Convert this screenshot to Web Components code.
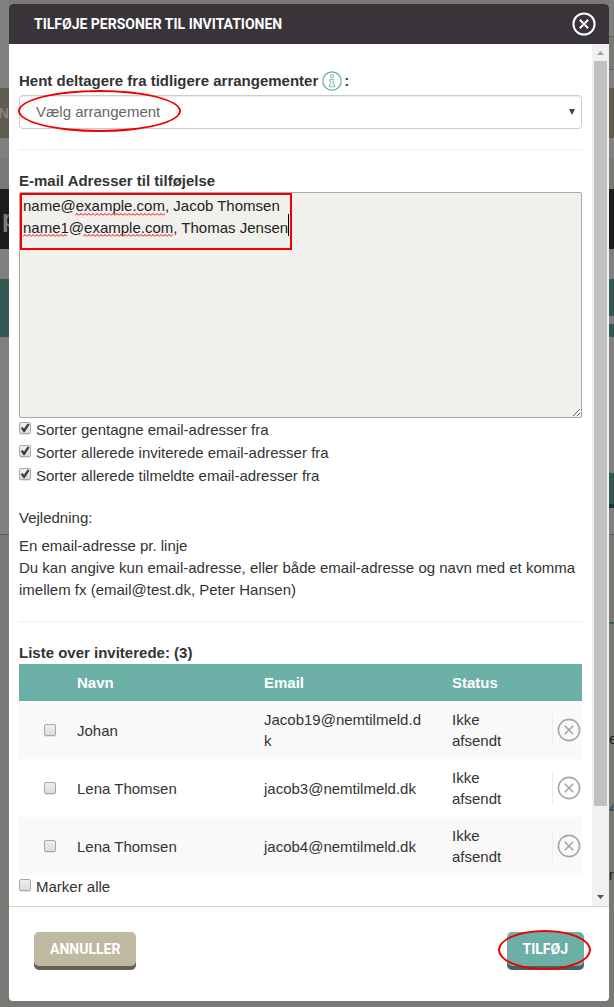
<!DOCTYPE html>
<html lang="da">
<head>
<meta charset="utf-8">
<meta name="viewport" content="width=device-width, initial-scale=1">
<title>Tilføje personer til invitationen</title>
<style>
  html, body {
    margin: 0;
    min-height: 100%;
  }

  body {
    font: 15px/22px "Liberation Sans", Arial, sans-serif;
    color: #333;
    background: #7b7976;
  }
</style>
</head>
<body>
<invite-page></invite-page>

<script>
// Small helper so each element only has to supply its markup
class BaseElement extends HTMLElement {
    constructor() {
        super()
        this.attachShadow({ mode: 'open' })
    }

    connectedCallback() {
        this.shadowRoot.innerHTML = this.template()
    }
}

// The dimmed page behind the dialog
class PageBackdrop extends BaseElement {
    template() {
        return `
      <style>
        :host {
          display: flex;
          justify-content: space-between;
          overflow: hidden;
          background: #7b7976;
        }

        .side {
          display: flex;
          flex-direction: column;
          width: 9px;
        }

        .right {
          width: 5px;
        }

        .side > div {
          box-sizing: border-box;
          overflow: hidden;
          white-space: nowrap;
        }

        .plain { background: #808080; }
        .warm { background: #7b7976; }
        .line { border-top: 1px solid #5f5d5a; }
        .olive { background: #605d50; color: #85838a; font-weight: 700; line-height: 50px; }
        .dark { background: #1c1c1c; color: #807e7b; font-size: 24px; font-weight: 700; line-height: 60px; }
        .teal { background: #365853; }
        .shade { background: #1f3331; }
        .number { color: #365853; font-size: 24px; }
        .text { color: #1c1c1c; }
        .left .olive { display: flex; justify-content: flex-end; }
        .left .dark { padding-left: 2px; }
      </style>

      <div class="side left">
        <div class="plain" style="height: 88px"></div>
        <div class="olive" style="height: 50px">AN</div>
        <div class="plain" style="height: 20px"></div>
        <div class="warm" style="height: 31px"></div>
        <div class="dark" style="height: 60px">p</div>
        <div class="plain" style="height: 30px"></div>
        <div class="teal" style="height: 58px"></div>
        <div class="plain" style="height: 197px"></div>
        <div class="warm line" style="height: 20px"></div>
      </div>
      <div class="side right">
        <div class="plain" style="height: 36px"></div>
        <div class="warm line" style="height: 33px"></div>
        <div class="plain line" style="height: 19px"></div>
        <div class="olive" style="height: 50px"></div>
        <div class="plain" style="height: 20px"></div>
        <div class="warm" style="height: 31px"></div>
        <div class="dark" style="height: 60px"></div>
        <div class="plain" style="height: 30px"></div>
        <div class="teal" style="height: 37px"></div>
        <div class="plain" style="height: 8px"></div>
        <div class="teal" style="height: 13px"></div>
        <div class="plain" style="height: 136px"></div>
        <div class="teal" style="height: 31px"></div>
        <div class="shade" style="height: 4px"></div>
        <div class="plain" style="height: 26px"></div>
        <div class="warm line" style="height: 86px"></div>
        <div class="number" style="height: 108px">T</div>
        <div class="text" style="height: 68px">e</div>
        <div class="number" style="height: 68px">4</div>
        <div class="text" style="height: 40px">n</div>
      </div>
    `
    }
}

// Circle with a cross, used in the header and in the guest rows
class CloseButton extends BaseElement {
    template() {
        return `
      <style>
        :host {
          display: block;
          width: 24px;
          height: 24px;
        }

        button {
          display: block;
          width: 100%;
          height: 100%;
          padding: 0;
          border: 0;
          background: none;
          color: inherit;
          cursor: pointer;
        }

        svg {
          display: block;
          stroke-width: var(--close-stroke, 1.6);
        }
      </style>

      <button type="button" aria-label="${this.getAttribute('label')}">
        <svg viewBox="0 0 24 24" fill="none" stroke="currentColor">
          <circle cx="12" cy="12" r="10.6"/>
          <path d="M7.8 7.8l8.4 8.4M16.2 7.8l-8.4 8.4"/>
        </svg>
      </button>
    `
    }
}

class PushButton extends BaseElement {
    template() {
        return `
      <style>
        :host {
          display: block;
          --face: #bfb9a2;
          --edge: #655f54;
        }

        :host([primary]) {
          --face: #6cafa7;
          --edge: #3f6463;
        }

        button {
          display: block;
          height: 34px;
          margin-bottom: 4px;
          padding: 0 16px;
          border: 0;
          border-radius: 5px;
          background: var(--face);
          box-shadow: 0 4px 0 var(--edge);
          color: #fff;
          font: 700 14px/34px Roboto, sans-serif;
          text-transform: uppercase;
          cursor: pointer;
        }
      </style>

      <button type="button"><slot></slot></button>
    `
    }
}

// Hand-drawn style marking laid over whatever it sits in
class RedMark extends BaseElement {
    template() {
        return `
      <style>
        :host {
          display: block;
          position: absolute;
          box-sizing: border-box;
          border: 2px solid #f00000;
          pointer-events: none;
        }

        :host([round]) {
          border-radius: 50%;
        }
      </style>
    `
    }
}

class CheckOption extends BaseElement {
    template() {
        const checked = this.hasAttribute('checked') ? 'checked' : ''
        const name = this.getAttribute('label')
        return `
      <style>
        :host {
          display: block;
        }

        label {
          display: flex;
          gap: 5px;
          line-height: 23px;
        }

        :host([bare]) label {
          justify-content: flex-end;
        }

        input {
          appearance: none;
          flex: none;
          box-sizing: border-box;
          width: 12px;
          height: 12px;
          margin: 4px 0;
          border: 1px solid #a8a8a8;
          border-radius: 2px;
          background: linear-gradient(#eee, #dcdcdc);
          box-shadow: 0 1px 0 #e4e4e4;
        }

        input:checked::after {
          content: "";
          display: block;
          width: 10px;
          height: 10px;
          background: #3c3c3c;
          clip-path: polygon(8% 52%, 24% 40%, 40% 58%, 76% 4%, 96% 16%, 46% 92%, 36% 92%);
        }
      </style>

      <label><input type="checkbox" ${checked} ${name ? `aria-label="${name}"` : ''}><slot></slot></label>
    `
    }
}

// Pick an earlier event to copy the guests from
class EventPicker extends BaseElement {
    template() {
        return `
      <style>
        :host {
          display: block;
        }

        .title {
          display: flex;
          align-items: center;
          font-weight: 700;
        }

        .title svg {
          width: 20px;
          height: 20px;
          margin: 0 2px 0 4px;
        }

        .field {
          position: relative;
          margin-top: 3px;
        }

        select {
          appearance: none;
          display: block;
          width: 100%;
          height: 34px;
          padding: 0 16px;
          border: 1px solid #ccc;
          border-radius: 4px;
          background: #fff;
          box-shadow: inset 0 1px 1px rgba(0, 0, 0, .08);
          color: #666;
          font: inherit;
        }

        .arrow {
          position: absolute;
          right: 7px;
          top: 14px;
          width: 6px;
          height: 6px;
          pointer-events: none;
        }

        red-mark {
          left: -1px;
          top: -5px;
          width: 163px;
          height: 42px;
        }
      </style>

      <label class="title" for="event">
        <span>Hent deltagere fra tidligere arrangementer</span>
        <svg viewBox="0 0 20 20" fill="none" stroke="#6cafa7">
          <circle cx="10" cy="10" r="9.2" stroke-width="1.3"/>
          <circle cx="10" cy="5.2" r="1.6" stroke-width=".9"/>
          <path d="M7.5 8.5h3.8v5.4h1.4v1.9H7.3v-1.9h1.5v-3.6H7.5z" stroke-width=".8"/>
        </svg>
        <span>:</span>
      </label>
      <div class="field">
        <select id="event"><option>Vælg arrangement</option></select>
        <svg class="arrow" viewBox="0 0 6 6"><path d="M0 0h6L3 6z" fill="#444"/></svg>
        <red-mark round></red-mark>
      </div>
    `
    }
}

class EmailBox extends BaseElement {
    template() {
        return `
      <style>
        :host {
          display: block;
        }

        label {
          display: block;
          font-weight: 700;
        }

        .field {
          position: relative;
        }

        textarea {
          display: block;
          box-sizing: border-box;
          width: 100%;
          height: 226px;
          padding: 2px 3px;
          border: 1px solid #aaa;
          border-radius: 2px;
          background: #f1f0ec;
          color: #222;
          font: inherit;
          resize: both;
        }

        .spelling {
          position: absolute;
          left: 0;
          top: 0;
          width: 280px;
          height: 60px;
          pointer-events: none;
        }

        red-mark {
          left: 1px;
          top: 1px;
          width: 272px;
          height: 57px;
        }
      </style>

      <label for="emails">E-mail Adresser til tilføjelse</label>
      <div class="field">
        <textarea id="emails" spellcheck="false">name@example.com, Jacob Thomsen
name1@example.com, Thomas Jensen</textarea>
        <svg class="spelling" viewBox="0 0 280 60">
          <defs>
            <pattern id="wave" width="4" height="3" patternUnits="userSpaceOnUse">
              <path d="M0 2.5l2-2 2 2" fill="none" stroke="#e00"/>
            </pattern>
          </defs>
          <rect x="56" y="21" width="90" height="3" fill="url(#wave)"/>
          <rect x="4" y="42" width="44" height="3" fill="url(#wave)"/>
          <rect x="64" y="42" width="90" height="3" fill="url(#wave)"/>
          <path d="M269.5 22v22" stroke="#000"/>
        </svg>
        <red-mark></red-mark>
      </div>
    `
    }
}

class GuestTable extends BaseElement {
    template() {
        const guests = [
            { name: 'Johan', email: 'Jacob19@nemtilmeld.dk', status: 'Ikke afsendt' },
            { name: 'Lena Thomsen', email: 'jacob3@nemtilmeld.dk', status: 'Ikke afsendt' },
            { name: 'Lena Thomsen', email: 'jacob4@nemtilmeld.dk', status: 'Ikke afsendt' }
        ]
        return `
      <style>
        :host {
          display: block;
        }

        table {
          width: 100%;
          table-layout: fixed;
          border-collapse: collapse;
          line-height: 21px;
        }

        caption {
          font-weight: 700;
          line-height: 22px;
          text-align: left;
        }

        th, td {
          box-sizing: border-box;
        }

        th {
          padding: 8px;
          background: #6cafa7;
          color: #fff;
          text-align: left;
        }

        td {
          padding: 8px 22px 8px 8px;
          overflow-wrap: anywhere;
        }

        tbody tr:nth-child(odd) {
          background: #f9f9f9;
        }

        .pick { width: 50px; }
        .name { width: 187px; }
        .email { width: 188px; }
        .remove { width: 30px; }

        th.pick, th.remove {
          padding: 0;
        }

        td.pick {
          padding: 0 13px 0 0;
        }

        td.remove {
          padding: 0;
        }

        td.remove div {
          display: flex;
          align-items: center;
          height: 32px;
          padding-left: 4px;
          border-left: 1px solid #eee;
          color: #a6a6a6;
        }
      </style>

      <table>
        <caption>Liste over inviterede: (3)</caption>
        <thead>
          <tr>
            <th class="pick"></th>
            <th class="name">Navn</th>
            <th class="email">Email</th>
            <th>Status</th>
            <th class="remove"></th>
          </tr>
        </thead>
        <tbody>
          ${guests.map(guest => `
            <tr>
              <td class="pick"><check-option bare label="Vælg ${guest.name}"></check-option></td>
              <td>${guest.name}</td>
              <td>${guest.email}</td>
              <td>${guest.status}</td>
              <td class="remove"><div><close-button label="Fjern ${guest.name}"></close-button></div></td>
            </tr>
          `).join('')}
        </tbody>
      </table>
    `
    }
}

class ScrollTrack extends BaseElement {
    template() {
        return `
      <style>
        :host {
          display: flex;
          flex-direction: column;
          align-items: center;
          width: 17px;
          background: #f1f1f1;
        }

        svg {
          width: 17px;
          height: 17px;
        }

        .track {
          display: flex;
          flex-direction: column;
          flex: 1;
        }

        .thumb {
          flex: 0 0 90%;
          width: 13px;
          background: #c1c1c1;
        }
      </style>

      <svg viewBox="0 0 17 17"><path d="M5 11h7L8.5 7z" fill="#a3a3a3"/></svg>
      <div class="track"><div class="thumb"></div></div>
      <svg viewBox="0 0 17 17"><path d="M5 6h7l-3.5 4z" fill="#505050"/></svg>
    `
    }
}

class ModalDialog extends BaseElement {
    template() {
        return `
      <style>
        :host {
          display: flex;
          flex-direction: column;
          border-radius: 4px;
          background: #fff;
          overflow: hidden;
        }

        header {
          display: flex;
          align-items: center;
          justify-content: space-between;
          height: 40px;
          padding: 0 13px 0 25px;
          background: #38343a;
          color: #fff;
          --close-stroke: 2;
        }

        h1 {
          margin: 0;
          font: 700 14px/40px Roboto, sans-serif;
          text-transform: uppercase;
        }

        main {
          display: flex;
          flex: 1;
        }

        .content {
          flex: 1;
          min-width: 0;
          padding: 26px 10px 8px;
        }

        footer {
          display: flex;
          justify-content: space-between;
          padding: 25px 25px 31px;
          border-top: 1px solid #d9d6c6;
        }
      </style>

      <header>
        <h1>${this.getAttribute('heading')}</h1>
        <close-button label="Luk"></close-button>
      </header>
      <main>
        <div class="content"><slot></slot></div>
        <scroll-track></scroll-track>
      </main>
      <footer><slot name="footer"></slot></footer>
    `
    }
}

class InvitePage extends BaseElement {
    template() {
        return `
      <style>
        :host {
          display: block;
          position: relative;
          box-sizing: border-box;
          padding: 4px 5px 6px 9px;
        }

        page-backdrop {
          position: absolute;
          inset: 0;
        }

        modal-dialog {
          position: relative;
        }

        hr {
          height: 1px;
          margin: 20px 0;
          border: 0;
          background: #eee;
        }

        p {
          margin: 20px 0 6px;
        }

        p + p {
          margin: 0;
        }

        red-mark {
          left: -9px;
          right: -7px;
          top: -2px;
          bottom: 0;
        }

        .submit {
          position: relative;
        }
      </style>

      <page-backdrop aria-hidden="true"></page-backdrop>
      <modal-dialog role="dialog" heading="Tilføje personer til invitationen">
        <event-picker></event-picker>
        <hr>
        <email-box></email-box>
        <check-option checked>Sorter gentagne email-adresser fra</check-option>
        <check-option checked>Sorter allerede inviterede email-adresser fra</check-option>
        <check-option checked>Sorter allerede tilmeldte email-adresser fra</check-option>
        <p>Vejledning:</p>
        <p>En email-adresse pr. linje<br>Du kan angive kun email-adresse, eller både email-adresse og navn med et komma imellem fx (email@test.dk, Peter Hansen)</p>
        <hr>
        <guest-table></guest-table>
        <check-option>Marker alle</check-option>
        <push-button slot="footer">Annuller</push-button>
        <div class="submit" slot="footer">
          <push-button primary>Tilføj</push-button>
          <red-mark round></red-mark>
        </div>
      </modal-dialog>
    `
    }
}

customElements.define('page-backdrop', PageBackdrop)
customElements.define('close-button', CloseButton)
customElements.define('push-button', PushButton)
customElements.define('red-mark', RedMark)
customElements.define('check-option', CheckOption)
customElements.define('event-picker', EventPicker)
customElements.define('email-box', EmailBox)
customElements.define('guest-table', GuestTable)
customElements.define('scroll-track', ScrollTrack)
customElements.define('modal-dialog', ModalDialog)
customElements.define('invite-page', InvitePage)
</script>
</body>
</html>
